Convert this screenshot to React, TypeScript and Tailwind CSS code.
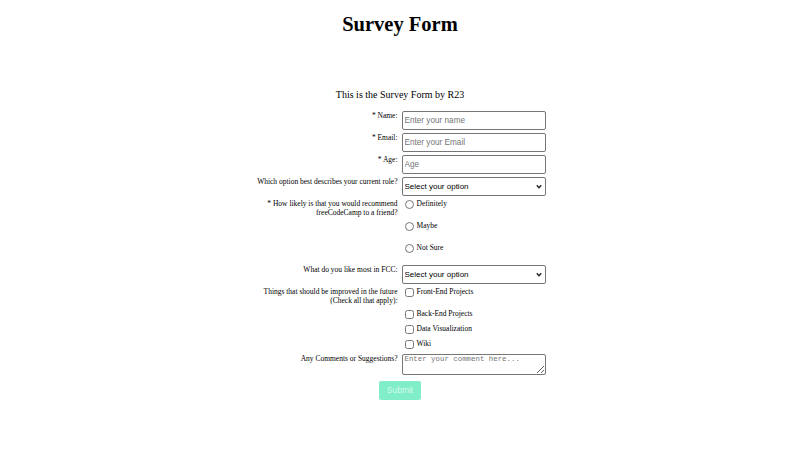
import React from "react";

function Row({ label, children }: { label: React.ReactNode; children: React.ReactNode }) {
  return (
    <div className="flex items-start gap-[4px]">
      <label className="w-[143px] shrink-0 text-right text-[7.5px] leading-[9px] pt-0">{label}</label>
      <div className="w-[144px]">{children}</div>
    </div>
  );
}

const inputCls =
  "block w-full h-[19px] border border-[#767676] rounded-[2px] px-[2px] text-[8.2px] outline-none placeholder:text-[#757575] bg-white font-['Liberation_Sans',sans-serif]";

function Select() {
  return (
    <div className="relative h-[19px]">
      <select
        className="block w-full h-[19px] appearance-none border border-[#767676] rounded-[2px] pl-[2px] text-[8px] text-black bg-white font-['Liberation_Sans',sans-serif]"
        defaultValue=""
      >
        <option value="">Select your option</option>
      </select>
      <svg className="absolute right-[4px] top-[7px] w-[6px] h-[5px] pointer-events-none" viewBox="0 0 6 5">
        <path d="M0.8 1.2 L3 3.6 L5.2 1.2" fill="none" stroke="#222" strokeWidth="1.4" />
      </svg>
    </div>
  );
}

export default function App() {
  return (
    <div className="w-[800px] h-[450px] bg-white text-black font-['Liberation_Serif',serif]">
      <h1 className="text-center text-[20.5px] font-bold pt-[11px] leading-[26px]">Survey Form</h1>
      <p className="text-center text-[10px] mt-[51px] leading-[14px]">This is the Survey Form by R23</p>
      <form className="flex flex-col items-center gap-[3px] mt-[9px]" onSubmit={(e) => e.preventDefault()}>
        <Row label="* Name:">
          <input className={inputCls} placeholder="Enter your name" />
        </Row>
        <Row label="* Email:">
          <input className={inputCls} placeholder="Enter your Email" />
        </Row>
        <Row label="* Age:">
          <input className={inputCls} placeholder="Age" />
        </Row>
        <Row label="Which option best describes your current role?">
          <Select />
        </Row>
        <Row label="* How likely is that you would recommend freeCodeCamp to a friend?">
          <div className="flex flex-col gap-[3px]">
            {["Definitely", "Maybe", "Not Sure"].map((o) => (
              <label key={o} className="flex items-start h-[19px] text-[7.5px] leading-[9px]">
                <input type="radio" name="rec" className="w-[9px] h-[9px] m-0 mt-[1px] mx-[3px]" />
                {o}
              </label>
            ))}
          </div>
        </Row>
        <Row label="What do you like most in FCC:">
          <Select />
        </Row>
        <Row label={<>Things that should be improved in the future<br />(Check all that apply):</>}>
          <div className="flex flex-col gap-[3px]">
            {["Front-End Projects", "Back-End Projects", "Data Visualization", "Wiki"].map((o, i) => (
              <label
                key={o}
                className={`flex items-start text-[7.5px] leading-[9px] ${i === 0 ? "h-[19px]" : "h-[12px]"}`}
              >
                <input type="checkbox" className="w-[9px] h-[9px] m-0 mt-[1px] mx-[3px]" />
                {o}
              </label>
            ))}
          </div>
        </Row>
        <Row label="Any Comments or Suggestions?">
          <textarea
            className="block w-full h-[21px] border border-[#767676] rounded-[2px] px-[2px] text-[7.4px] leading-[9px] font-['Liberation_Mono',monospace] placeholder:text-[#757575]"
            placeholder="Enter your comment here..."
          />
        </Row>
        <button
          type="submit"
          className="mt-[3px] w-[42px] h-[19px] rounded-[2px] bg-[#80eec8] text-[#d4faec] text-[8.5px] font-['Liberation_Sans',sans-serif]"
        >
          Submit
        </button>
      </form>
    </div>
  );
}
